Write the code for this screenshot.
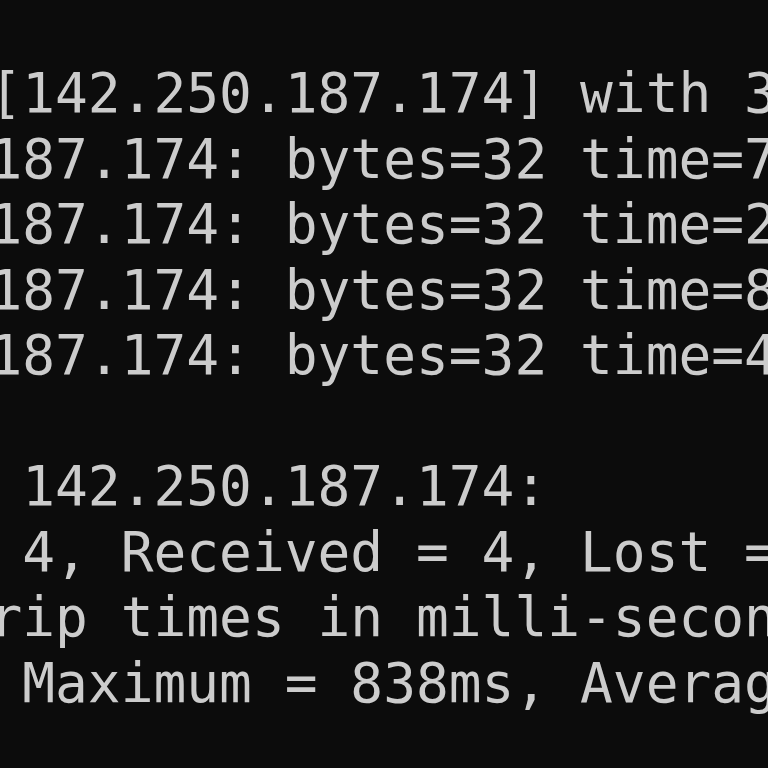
const lines = [
  "Pinging google.com [142.250.187.174] with 32 bytes of data:",
  "Reply from 142.250.187.174: bytes=32 time=75ms TTL=117",
  "Reply from 142.250.187.174: bytes=32 time=226ms TTL=117",
  "Reply from 142.250.187.174: bytes=32 time=838ms TTL=117",
  "Reply from 142.250.187.174: bytes=32 time=412ms TTL=117",
  "",
  "Ping statistics for 142.250.187.174:",
  "    Packets: Sent = 4, Received = 4, Lost = 0 (0% loss),",
  "Approximate round trip times in milli-seconds:",
  "    Minimum = 75ms, Maximum = 838ms, Average = 387ms",
];

export default function App() {
  return (
    <div className="w-[768px] h-[768px] bg-[#0c0c0c] overflow-hidden">
      <pre className="-ml-[634px] pt-[61px] font-['DejaVu_Sans_Mono',monospace] text-[54.5px] leading-[65.5px] text-[#cccccc] whitespace-pre">
        {lines.map((l, i) => (
          <div key={i}>{l === "" ? " " : l}</div>
        ))}
      </pre>
    </div>
  );
}
